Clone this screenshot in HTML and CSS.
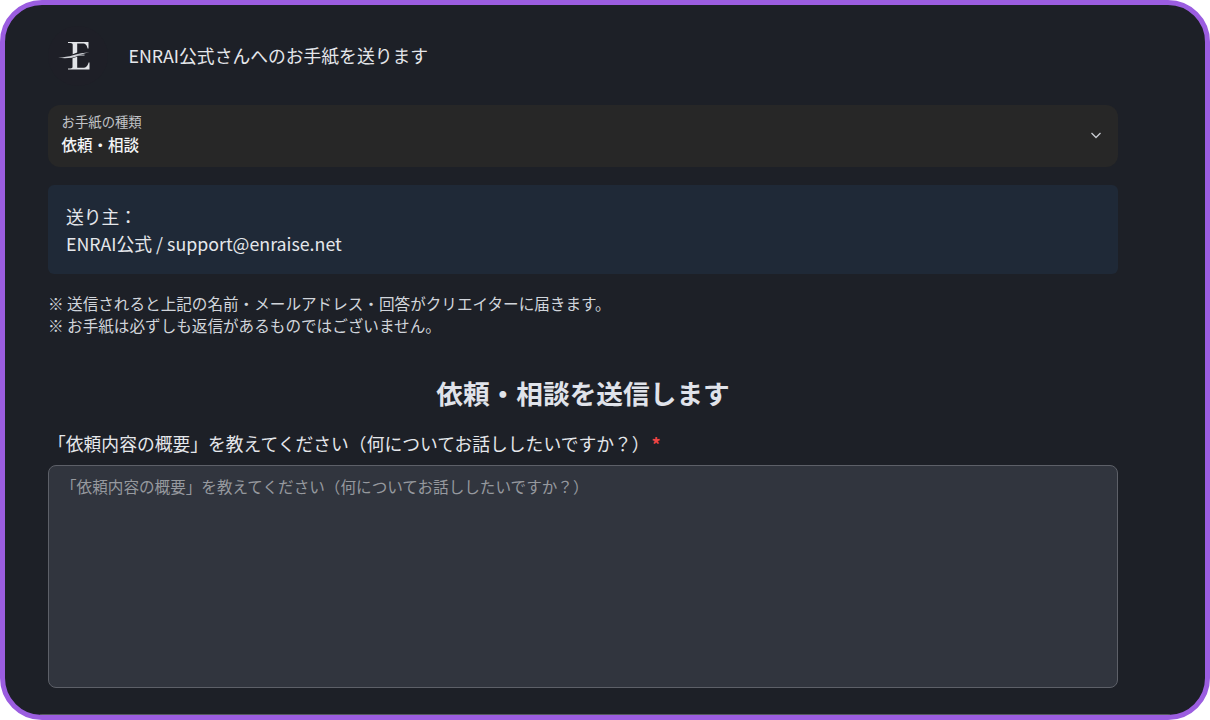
FILE: index.html
```html
<!DOCTYPE html>
<html lang="ja">
<head>
<meta charset="utf-8">
<title>お手紙</title>
<link rel="stylesheet" href="styles.css">
</head>
<body>
<main class="frame">
  <div class="content">
    <header class="head">
      <div class="logo">
        <svg width="40" height="40" viewBox="0 0 40 40" aria-hidden="true">
          <path d="M10 6h20.500v6.500h-.9c-.5-2.800-1.800-4.900-5-4.900h-5.400v8.800l-4.500 1.800V8.400c0-.9-1.400-1.300-4.700-1.300z" fill="#e2e4e8"/>
          <path d="M0 21.800c5.500-.5 11-1.300 15-2.600 5-1.600 11-2.500 16.500-3-4.500 1.200-9 2.200-12 3.800-4.500 2.200-12 2.500-19.500 1.800z" fill="#cfd1d6"/>
          <path d="M14.500 22.200l4.700-1.500v11.100h5.600c3.500 0 5.100-2.300 5.800-5.300h.9v7H10v-1c3.200 0 4.500-.4 4.500-1.300z" fill="#e2e4e8"/>
          <path d="M19.500 18.600h7v1.200h-7z" fill="#a4a7ad"/>
        </svg>
      </div>
      <h1 class="head-title">ENRAI公式さんへのお手紙を送ります</h1>
    </header>

    <div class="select">
      <div class="select-text">
        <span class="select-label">お手紙の種類</span>
        <span class="select-value">依頼・相談</span>
      </div>
      <svg class="chevron" width="12" height="12" viewBox="0 0 12 12" aria-hidden="true">
        <path d="M1.500 4l4.500 4.500L10.500 4" fill="none" stroke="#c9ccd2" stroke-width="1.300"/>
      </svg>
    </div>

    <section class="sender">
      <p>送り主：</p>
      <p>ENRAI公式 / support@enraise.net</p>
    </section>

    <div class="notes">
      <p>※ 送信されると上記の名前・メールアドレス・回答がクリエイターに届きます。</p>
      <p>※ お手紙は必ずしも返信があるものではございません。</p>
    </div>

    <h2 class="form-title">依頼・相談を送信します</h2>

    <label class="field-label" for="summary">「依頼内容の概要」を教えてください（何についてお話ししたいですか？）<span class="req">*</span></label>
    <textarea class="field" id="summary" placeholder="「依頼内容の概要」を教えてください（何についてお話ししたいですか？）"></textarea>
  </div>
  <div class="edge"></div>
</main>
</body>
</html>
```
FILE: styles.css
```css
* { box-sizing: border-box; }
html, body { margin: 0; height: 100%; background: #fff; }
body { font-family: "Noto Sans CJK JP", "Noto Sans", sans-serif; color: #e5e7eb; overflow: hidden; }
p, h1, h2 { margin: 0; font-weight: 400; }

.frame {
  height: 720px;
  border: 5px solid #9b5de0;
  border-radius: 42px;
  background: #1d2027;
  overflow: hidden;
  display: flex;
  flex-direction: column;
  justify-content: space-between;
}
.edge { height: 1px; margin: 0 35px; background: #55585f; flex: none; }
.content {
  width: 1070px;
  margin-left: 43px;
  display: flex;
  flex-direction: column;
}

.head { display: flex; align-items: center; gap: 20.5px; height: 100px; padding: 21px 0 19px; flex: none; }
.logo {
  width: 60px; height: 60px; border-radius: 50%;
  background: #1e1f27;
  display: flex; align-items: center; justify-content: center;
}
.head-title { font-size: 17.8px; line-height: 26px; color: #e5e7eb; margin-bottom: 2px; }

.select {
  height: 62px;
  background: #272727;
  border-radius: 12px;
  padding: 8px 16px 0 13.6px;
  display: flex; align-items: flex-start; justify-content: space-between;
  flex: none;
}
.select-text { display: flex; flex-direction: column; }
.select-label { font-size: 13.35px; line-height: 18px; color: #c2c4c8; }
.select-value { font-size: 15.5px; line-height: 26px; color: #f3f4f6; font-weight: 500; }
.chevron { margin-top: 16px; }

.sender {
  margin-top: 18px;
  height: 89px;
  background: #1f2937;
  border-radius: 6px;
  padding: 18px 18px;
  font-size: 17.8px;
  line-height: 26.7px;
  color: #e5e7eb;
  flex: none;
}

.notes { margin-top: 18px; font-size: 15.6px; line-height: 22px; color: #d1d5db; }

.form-title {
  margin-top: 37px;
  text-align: center;
  font-size: 26.7px;
  line-height: 40px;
  font-weight: 700;
  color: #e0e3ea;
}

.field-label { margin-top: 17px; font-size: 17.8px; line-height: 26px; color: #e5e7eb; }
.req { color: #ef4444; margin-left: 2px; font-size: 17.8px; font-weight: 700; }

.field {
  display: block;
  margin-top: 9px;
  width: 1070px;
  height: 223px;
  background: #31353e;
  border: 1px solid #5d6068;
  border-radius: 8px;
  padding: 9px 12px;
  font: 400 15.6px/23px "Noto Sans CJK JP", "Noto Sans", sans-serif;
  color: #e5e7eb;
  resize: none;
  outline: none;
}
.field::placeholder { color: #96999e; opacity: 1; }
```
